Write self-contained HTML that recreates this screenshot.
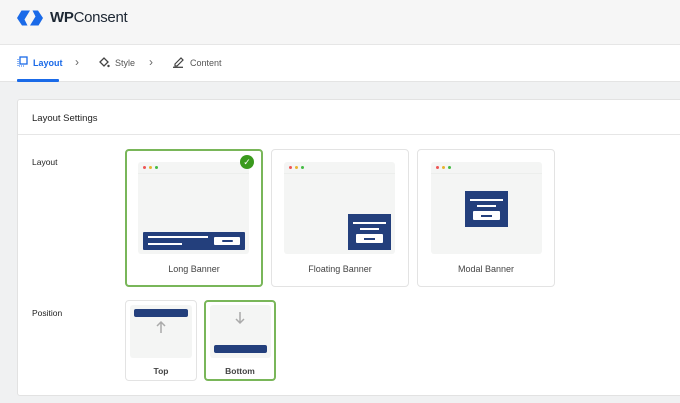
<!DOCTYPE html>
<html><head><style>
*{margin:0;padding:0;box-sizing:border-box}
body{width:680px;height:403px;overflow:hidden;background:#f0f1f2;font-family:"Liberation Sans",sans-serif;position:relative;color:#333}
.a{position:absolute}
.hdr{left:0;top:0;width:680px;height:45px;background:#f6f6f6;border-bottom:1px solid #e6e6e6}
.tabs{left:0;top:45px;width:680px;height:37px;background:#fff;border-bottom:1px solid #e4e4e4}
.t{font-size:9px;color:#555;top:13px}
.card{left:17px;top:99px;width:680px;height:297px;background:#fff;border:1px solid #e2e2e2;border-radius:3px}
.opt{background:#fff;border:1.5px solid #e3e3e3;border-radius:4px}
.sel{border:2px solid #79b659}
.pv{background:#f4f5f4;border-radius:3px}
.lbl{font-size:9px;color:#444;width:100%;text-align:center}
.dots{left:5px;top:4px;font-size:0}
.dots i{display:inline-block;width:3px;height:3px;border-radius:50%;margin-right:3px}
.blue{background:#233f7c}
.w{background:#fff}
</style></head><body>
<div class="a hdr"></div>
<svg class="a" style="left:0;top:0" width="50" height="35" viewBox="0 0 50 35"><path d="M17 18L21.5 10.5H30L24.5 19.5L27.5 25.5H22z M43 18L38.5 25.5H30L35.5 16.5L32.5 10.5H38z" fill="#1a6ae8"/></svg>
<div class="a" style="left:50px;top:9px;font-size:15px;color:#1d2733;letter-spacing:-0.3px"><b>WP</b>Consent</div>
<div class="a tabs"></div>
<svg class="a" style="left:17px;top:56px" width="11" height="11" viewBox="0 0 11 11"><rect x="3" y="1" width="7" height="7" fill="none" stroke="#1a6ae8" stroke-width="1.3"/><path d="M1 3v7h7" fill="none" stroke="#1a6ae8" stroke-width="1" stroke-dasharray="1 1"/></svg>
<div class="a t" style="left:33px;top:58px;color:#1a6ae8;font-weight:bold">Layout</div>
<div class="a" style="left:17px;top:79px;width:42px;height:3px;background:#1a6ae8;border-radius:1px"></div>
<div class="a t" style="left:75px;top:55px;font-size:12px;color:#666">›</div>
<svg class="a" style="left:98px;top:56px" width="12" height="12" viewBox="0 0 12 12"><path d="M2 6l4-4 4 4-4 4z" fill="none" stroke="#444" stroke-width="1.3"/><circle cx="10.5" cy="10" r="1.2" fill="#444"/></svg>
<div class="a t" style="left:115px;top:58px">Style</div>
<div class="a t" style="left:149px;top:55px;font-size:12px;color:#666">›</div>
<svg class="a" style="left:172px;top:55px" width="13" height="13" viewBox="0 0 13 13"><path d="M3 9l6-6 2 2-6 6H3z" fill="none" stroke="#444" stroke-width="1.2"/><path d="M1 12.3h10" stroke="#444" stroke-width="1.3"/></svg>
<div class="a t" style="left:190px;top:58px">Content</div>

<div class="a card"></div>
<div class="a" style="left:32px;top:113px;font-size:9.5px;color:#222">Layout Settings</div>
<div class="a" style="left:18px;top:134px;width:662px;height:1px;background:#e6e6e6"></div>
<div class="a" style="left:32px;top:157px;font-size:8.5px;color:#222">Layout</div>
<div class="a" style="left:32px;top:308px;font-size:8.5px;color:#222">Position</div>

<!-- long -->
<div class="a opt sel" style="left:125px;top:149px;width:138px;height:138px"></div>
<div class="a pv" style="left:138px;top:162px;width:111px;height:92px">
 <div class="a dots"><i style="background:#e55"></i><i style="background:#e8b431"></i><i style="background:#4b4"></i></div>
 <div class="a" style="left:0;top:11px;width:111px;height:1px;background:#eceeec"></div>
 <div class="a blue" style="left:5px;top:70px;width:102px;height:18px;border-radius:1px">
  <div class="a w" style="left:5px;top:4px;width:60px;height:2px"></div>
  <div class="a w" style="left:5px;top:11px;width:34px;height:2px"></div>
  <div class="a w" style="left:71px;top:5px;width:26px;height:8px;border-radius:1px"><div class="a blue" style="left:8px;top:3px;width:11px;height:2px;border-radius:1px"></div></div>
 </div>
</div>
<div class="a" style="left:240px;top:155px;width:14px;height:14px;border-radius:50%;background:#3a9a1d;color:#fff;font-size:9px;text-align:center;line-height:14px">✓</div>
<div class="a lbl" style="left:126px;top:264px;width:136px">Long Banner</div>

<!-- floating -->
<div class="a opt" style="left:271px;top:149px;width:138px;height:138px"></div>
<div class="a pv" style="left:284px;top:162px;width:111px;height:92px">
 <div class="a dots"><i style="background:#e55"></i><i style="background:#e8b431"></i><i style="background:#4b4"></i></div>
 <div class="a" style="left:0;top:11px;width:111px;height:1px;background:#eceeec"></div>
 <div class="a blue" style="left:64px;top:52px;width:43px;height:36px">
  <div class="a w" style="left:5px;top:8px;width:33px;height:2px"></div>
  <div class="a w" style="left:12px;top:14px;width:19px;height:2px"></div>
  <div class="a w" style="left:8px;top:20px;width:27px;height:9px;border-radius:1px"><div class="a blue" style="left:8px;top:3.5px;width:11px;height:2px"></div></div>
 </div>
</div>
<div class="a lbl" style="left:272px;top:264px;width:136px">Floating Banner</div>

<!-- modal -->
<div class="a opt" style="left:417px;top:149px;width:138px;height:138px"></div>
<div class="a pv" style="left:431px;top:162px;width:111px;height:92px">
 <div class="a dots"><i style="background:#e55"></i><i style="background:#e8b431"></i><i style="background:#4b4"></i></div>
 <div class="a" style="left:0;top:11px;width:111px;height:1px;background:#eceeec"></div>
 <div class="a blue" style="left:34px;top:29px;width:43px;height:36px">
  <div class="a w" style="left:5px;top:8px;width:33px;height:2px"></div>
  <div class="a w" style="left:12px;top:14px;width:19px;height:2px"></div>
  <div class="a w" style="left:8px;top:20px;width:27px;height:9px;border-radius:1px"><div class="a blue" style="left:8px;top:3.5px;width:11px;height:2px"></div></div>
 </div>
</div>
<div class="a lbl" style="left:418px;top:264px;width:136px">Modal Banner</div>

<!-- top -->
<div class="a opt" style="left:125px;top:300px;width:72px;height:81px"></div>
<div class="a pv" style="left:130px;top:305px;width:62px;height:53px">
 <div class="a blue" style="left:4px;top:4px;width:54px;height:8px;border-radius:2px"></div>
 <svg class="a" style="left:25px;top:15px" width="12" height="14" viewBox="0 0 12 14"><path d="M6 13V2M2 6l4-4 4 4" fill="none" stroke="#aaa" stroke-width="1.5"/></svg>
</div>
<div class="a lbl" style="left:126px;top:366px;width:70px;font-weight:bold;font-size:8.5px">Top</div>

<!-- bottom -->
<div class="a opt sel" style="left:204px;top:300px;width:72px;height:81px"></div>
<div class="a pv" style="left:210px;top:305px;width:61px;height:53px">
 <svg class="a" style="left:24px;top:6px" width="12" height="14" viewBox="0 0 12 14"><path d="M6 1v11M2 8l4 4 4-4" fill="none" stroke="#aaa" stroke-width="1.5"/></svg>
 <div class="a blue" style="left:4px;top:40px;width:53px;height:8px;border-radius:2px"></div>
</div>
<div class="a lbl" style="left:205px;top:366px;width:70px;font-weight:bold;font-size:8.5px">Bottom</div>
</body></html>
